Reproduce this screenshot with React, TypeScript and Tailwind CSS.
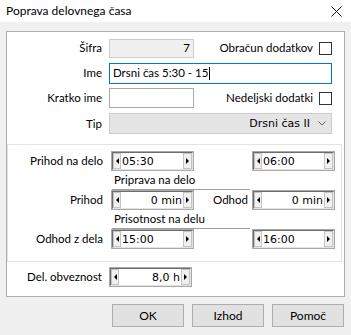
const Spin = ({ value, right, width }: { value: string; right?: boolean; width: string }) => (
  <div className={`${width} h-[20px] border border-[#a9a9a9] bg-white`}>
    <div className="flex h-full items-stretch border-t border-l border-t-[#6d6d6d] border-l-[#6d6d6d] border-b border-r border-b-[#e3e3e3] border-r-[#e3e3e3]">
      <div className="flex w-[8px] items-center justify-center border border-[#c4c4c4] bg-[#f0f0f0]">
        <div className="h-0 w-0 border-y-[3px] border-r-[3px] border-y-transparent border-r-black" />
      </div>
      <div
        className={`flex flex-1 items-center px-[1px] font-['DejaVu_Sans',sans-serif] text-[11px] leading-none ${
          right ? "justify-end" : "justify-start"
        }`}
      >
        {value}
      </div>
      <div className="flex w-[9px] items-center justify-center border border-[#c4c4c4] bg-[#f0f0f0]">
        <div className="h-0 w-0 border-y-[3px] border-l-[3px] border-y-transparent border-l-black" />
      </div>
    </div>
  </div>
);

const Check = () => <div className="h-[13px] w-[13px] border border-[#333333] bg-white" />;

const Label = ({ children, width }: { children: string; width: string }) => (
  <div className={`${width} shrink-0 text-right leading-none`}>{children}</div>
);

const Sub = ({ children }: { children: string }) => (
  <div className="ml-[104px] flex h-[19px] w-[138px] items-center border-b border-[#a0a0a0] pl-[2px] leading-none">
    {children}
  </div>
);

export default function App() {
  return (
    <div className="h-[335px] w-[351px] bg-[#f0f0f0] font-['Lato',sans-serif] text-[11.5px] text-black">
      <div className="flex h-[22px] items-center justify-between bg-white pl-[6px] pr-[9px] text-[12px]">
        <span className="leading-none">Poprava delovnega časa</span>
        <svg width="11" height="11" viewBox="0 0 11 11">
          <path d="M0.5 0.5 L10.5 10.5 M10.5 0.5 L0.5 10.5" stroke="#111" strokeWidth="1" />
        </svg>
      </div>

      <div className="mx-[6px] mt-[9px] h-[266px] border border-[#adadad] bg-white pt-[6px]">
        <div className="flex h-[20px] items-center">
          <Label width="w-[95px]">Šifra</Label>
          <div className="ml-[7px] flex h-[19px] w-[85px] items-center justify-end border border-[#cccccc] bg-[#f0f0f0] pr-[3px] leading-none">
            7
          </div>
          <div className="flex flex-1 items-center justify-end gap-[6px] pr-[12px]">
            <span className="leading-none">Obračun dodatkov</span>
            <Check />
          </div>
        </div>

        <div className="mt-[5px] flex h-[20px] items-center">
          <Label width="w-[95px]">Ime</Label>
          <div className="ml-[7px] mr-[12px] flex h-[21px] flex-1 items-center border border-[#0078d7] pl-[3px] leading-none">
            Drsni čas 5:30 - 15
            <span className="ml-[1px] h-[13px] w-[1px] bg-black" />
          </div>
        </div>

        <div className="mt-[5px] flex h-[20px] items-center">
          <Label width="w-[95px]">Kratko ime</Label>
          <div className="ml-[7px] h-[20px] w-[85px] border border-[#a9a9a9] bg-white" />
          <div className="flex flex-1 items-center justify-end gap-[6px] pr-[12px]">
            <span className="leading-none">Nedeljski dodatki</span>
            <Check />
          </div>
        </div>

        <div className="mt-[5px] flex h-[21px] items-center">
          <Label width="w-[95px]">Tip</Label>
          <div className="ml-[7px] mr-[12px] flex h-[21px] flex-1 items-center justify-end gap-[8px] border border-[#cccccc] bg-[#e5e5e5] pr-[5px] font-['DejaVu_Sans',sans-serif] text-[11px] leading-none">
            Drsni čas II
            <svg width="8" height="5" viewBox="0 0 8 5">
              <path d="M0.5 0.5 L4 4 L7.5 0.5" fill="none" stroke="#606060" strokeWidth="1" />
            </svg>
          </div>
        </div>

        <div className="mr-[2px] mt-[10px] h-[118px] border border-[#e3e3e3] pt-[6px]">
          <div className="flex h-[20px] items-center">
            <Label width="w-[95px]">Prihod na delo</Label>
            <div className="ml-[8px]">
              <Spin value="05:30" width="w-[83px]" />
            </div>
            <div className="ml-[58px]">
              <Spin value="06:00" width="w-[83px]" />
            </div>
          </div>
          <Sub>Priprava na delo</Sub>
          <div className="flex h-[20px] items-center">
            <Label width="w-[95px]">Prihod</Label>
            <div className="ml-[8px]">
              <Spin value="0 min" right width="w-[83px]" />
            </div>
            <div className="w-[54px] text-right leading-none">Odhod</div>
            <div className="ml-[4px]">
              <Spin value="0 min" right width="w-[83px]" />
            </div>
          </div>
          <Sub>Prisotnost na delu</Sub>
          <div className="flex h-[20px] items-center">
            <Label width="w-[95px]">Odhod z dela</Label>
            <div className="ml-[8px]">
              <Spin value="15:00" width="w-[83px]" />
            </div>
            <div className="ml-[58px]">
              <Spin value="16:00" width="w-[83px]" />
            </div>
          </div>
        </div>

        <div className="mt-[5px] flex h-[20px] items-center">
          <Label width="w-[95px]">Del. obveznost</Label>
          <div className="ml-[7px]">
            <Spin value="8,0 h" right width="w-[83px]" />
          </div>
        </div>
      </div>

      <div className="mt-[7px] flex justify-end gap-[8px] pr-[7px]">
        {["OK", "Izhod", "Pomoč"].map((t) => (
          <button
            key={t}
            type="button"
            className="flex h-[23px] w-[72px] items-center justify-center border border-[#adadad] bg-[#e1e1e1] text-[12px] leading-none"
          >
            {t}
          </button>
        ))}
      </div>
    </div>
  );
}
